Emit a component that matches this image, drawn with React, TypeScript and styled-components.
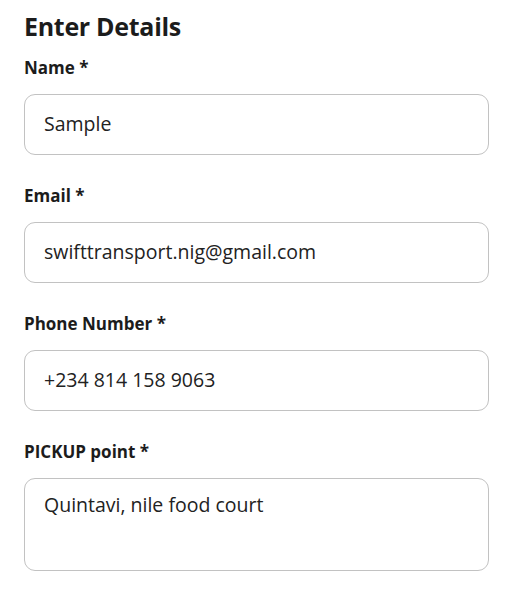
import React from "react";
import styled, { createGlobalStyle } from "styled-components";

const Global = createGlobalStyle`
  html, body { margin: 0; padding: 0; background: #ffffff; }
  body { font-family: "Open Sans", "Liberation Sans", sans-serif; color: #1c1c1c; }
  * { box-sizing: border-box; }
`;

const Page = styled.main`
  width: 465px;
  margin-left: 24px;
  padding-top: 10px;
  display: flex;
  flex-direction: column;
  gap: 14px;
`;

const Title = styled.h2`
  margin: 0;
  font-size: 25px;
  line-height: 32px;
  font-weight: 700;
  letter-spacing: -0.3px;
  color: #1c1c1c;
`;

const Fields = styled.div`
  display: flex;
  flex-direction: column;
  gap: 29px;
`;

const Field = styled.div`
  display: flex;
  flex-direction: column;
  gap: 16px;
`;

const Label = styled.label`
  padding-top: 2px;
  font-size: 17px;
  line-height: 20px;
  font-weight: 700;
  color: #1c1c1c;
`;

const controlStyles = `
  width: 100%;
  border: 1px solid #c2c2c2;
  border-radius: 11px;
  background: #ffffff;
  font-family: "Open Sans", "Liberation Sans", sans-serif;
  font-size: 19.5px;
  color: #222222;
  padding: 0 19px;
  outline: none;
  margin: 0;
`;

const TextInput = styled.input`
  ${controlStyles}
  height: 61px;
  line-height: 27px;
  padding-bottom: 3px;
`;

const TextArea = styled.textarea`
  ${controlStyles}
  display: block;
  height: 93px;
  line-height: 27px;
  padding-top: 12px;
  resize: none;
`;

const fields = [
  { id: "name", label: "Name *", value: "Sample" },
  { id: "email", label: "Email *", value: "swifttransport.nig@gmail.com" },
  { id: "phone", label: "Phone Number *", value: "+234 814 158 9063" },
];

export default function App() {
  return (
    <>
      <Global />
      <Page>
        <Title>Enter Details</Title>
        <Fields>
          {fields.map((f) => (
            <Field key={f.id}>
              <Label htmlFor={f.id}>{f.label}</Label>
              <TextInput id={f.id} value={f.value} readOnly />
            </Field>
          ))}
          <Field>
            <Label htmlFor="pickup">PICKUP point *</Label>
            <TextArea id="pickup" value="Quintavi, nile food court" readOnly />
          </Field>
        </Fields>
      </Page>
    </>
  );
}
